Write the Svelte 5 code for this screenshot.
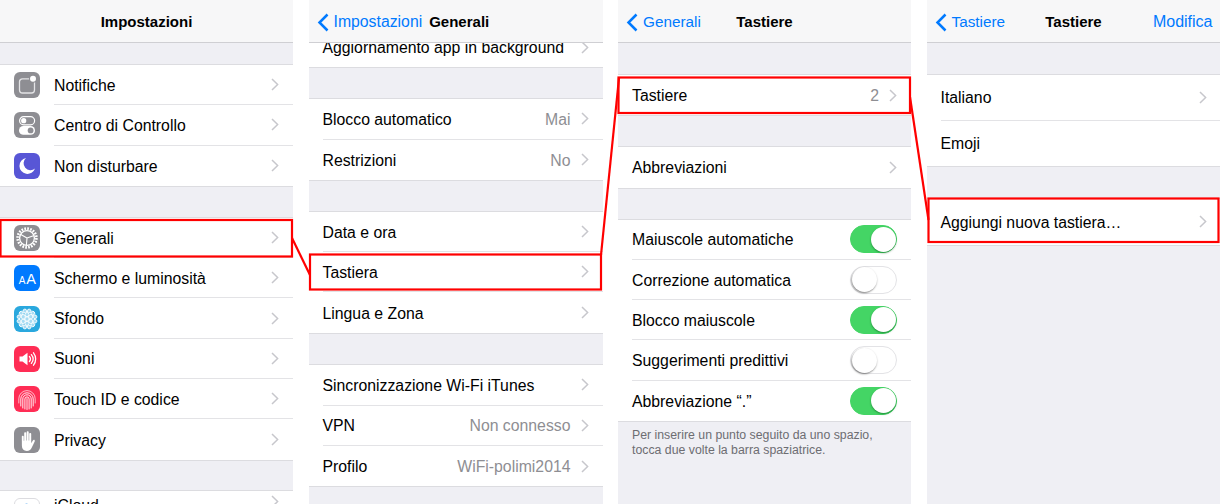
<script>
  const impostazioni = [
    { gap: 22, rows: [
      { label: 'Notifiche', icon: 'notifiche' },
      { label: 'Centro di Controllo', icon: 'controllo' },
      { label: 'Non disturbare', icon: 'luna' }
    ] },
    { gap: 32, rows: [
      { label: 'Generali', icon: 'generali' },
      { label: 'Schermo e luminosità', icon: 'schermo' },
      { label: 'Sfondo', icon: 'sfondo' },
      { label: 'Suoni', icon: 'suoni' },
      { label: 'Touch ID e codice', icon: 'touch' },
      { label: 'Privacy', icon: 'privacy' }
    ] },
    { gap: 31, rows: [{ label: 'iCloud', icon: 'icloud', alto: true }] }
  ];

  const generali = [
    { gap: -16, rows: [{ label: 'Aggiornamento app in background' }] },
    { gap: 32, rows: [
      { label: 'Blocco automatico', value: 'Mai' },
      { label: 'Restrizioni', value: 'No' }
    ] },
    { gap: 32, rows: [
      { label: 'Data e ora' },
      { label: 'Tastiera' },
      { label: 'Lingua e Zona' }
    ] },
    { gap: 32.5, rows: [
      { label: 'Sincronizzazione Wi-Fi iTunes' },
      { label: 'VPN', value: 'Non connesso' },
      { label: 'Profilo', value: 'WiFi-polimi2014' }
    ] }
  ];

  const tastiere = [
    { gap: 32, rows: [{ label: 'Tastiere', value: '2' }] },
    { gap: 32, rows: [{ label: 'Abbreviazioni' }] },
    { gap: 32, rows: [
      { label: 'Maiuscole automatiche', on: true },
      { label: 'Correzione automatica', on: false },
      { label: 'Blocco maiuscole', on: true },
      { label: 'Suggerimenti predittivi', on: false },
      { label: 'Abbreviazione “.”', on: true }
    ] }
  ];

  const elenco = [
    { gap: 32, rows: [{ label: 'Italiano' }, { label: 'Emoji', nochev: true }] },
    { gap: 33, rows: [{ label: 'Aggiungi nuova tastiera…' }] }
  ];

  const anelloInterno = [0, 60, 120, 180, 240, 300];
  const anelloEsterno = [0, 30, 60, 90, 120, 150, 180, 210, 240, 270, 300, 330];
</script>

{#snippet icona(nome)}
  <svg class="icona" viewBox="0 0 26 26" width="26" height="26" aria-hidden="true">
    {#if nome === 'notifiche'}
      <rect width="26" height="26" rx="6" fill="#8e8e93" />
      <rect x="5.5" y="6.8" width="15" height="14.2" rx="3" fill="none" stroke="#e4e4e6" stroke-width="1.3" />
      <circle cx="19" cy="6.8" r="4" fill="#8e8e93" />
      <circle cx="19" cy="6.8" r="3" fill="#fff" />
    {:else if nome === 'controllo'}
      <rect width="26" height="26" rx="6" fill="#8e8e93" />
      <rect x="5.6" y="4.6" width="15" height="8.2" rx="4.1" fill="none" stroke="#fff" stroke-width="1.2" />
      <circle cx="9.7" cy="8.7" r="2.6" fill="#fff" />
      <rect x="5" y="14" width="16" height="8.8" rx="4.4" fill="#fff" />
      <circle cx="16.6" cy="18.4" r="2.9" fill="#8e8e93" />
    {:else if nome === 'luna'}
      <rect width="26" height="26" rx="6" fill="#5856d6" />
      <path d="M12 5a8 8 0 1 0 9 10.500 6.800 6.800 0 0 1-9-10.500z" fill="#fff" />
    {:else if nome === 'generali'}
      <rect width="26" height="26" rx="6" fill="#8e8e93" />
      <circle cx="13" cy="13" r="9.4" fill="none" stroke="#fff" stroke-width="2.6" stroke-dasharray="1.7 1.25" />
      <circle cx="13" cy="13" r="7.4" fill="none" stroke="#fff" stroke-width="1.3" />
      <path d="M13 13 6.800 9.400M13 13l6.400-2.200M13 13l-.6 7" stroke="#fff" stroke-width="1.100" fill="none" />
    {:else if nome === 'schermo'}
      <rect width="26" height="26" rx="6" fill="#007aff" />
      <text class="aa piccola" x="8" y="18.500" text-anchor="middle">A</text>
      <text class="aa" x="17" y="18.500" text-anchor="middle">A</text>
    {:else if nome === 'sfondo'}
      <rect width="26" height="26" rx="6" fill="#2aa8de" />
      <g fill="#a8dcf3" stroke="#fff" stroke-width="0.9">
        <circle cx="13" cy="13" r="2.100" />
        {#each anelloInterno as a}
          <circle cx="13" cy="8.600" r="2.100" transform="rotate({a} 13 13)" />
        {/each}
        {#each anelloEsterno as a}
          <circle cx="13" cy="4.800" r="1.900" transform="rotate({a + 15} 13 13)" />
        {/each}
      </g>
    {:else if nome === 'suoni'}
      <rect width="26" height="26" rx="6" fill="#ff2d55" />
      <path d="M5.500 10.500h3l5-3.800v12.600l-5-3.800h-3z" fill="#fff" />
      <g fill="none" stroke="#fff" stroke-width="1.300" stroke-linecap="round">
        <path d="M15.400 10.400a4 4 0 0 1 0 5.200" />
        <path d="M17.400 8.600a7 7 0 0 1 0 8.800" />
        <path d="M19.500 6.800a10 10 0 0 1 0 12.400" />
      </g>
    {:else if nome === 'touch'}
      <rect width="26" height="26" rx="6" fill="#ff2d55" />
      <g fill="none" stroke="#fff" stroke-width="0.900" stroke-linecap="round">
        <path d="M4.800 17v-4.200a8.200 8.200 0 0 1 16.400 0V17" opacity=".75" />
        <path d="M6.800 20v-7a6.200 6.200 0 0 1 12.400 0v7" />
        <path d="M8.800 22v-9a4.200 4.200 0 0 1 8.400 0v9" />
        <path d="M10.900 23v-10a2.100 2.100 0 0 1 4.200 0v10" />
        <path d="M13 23.500V12.600" />
      </g>
    {:else if nome === 'privacy'}
      <rect width="26" height="26" rx="6" fill="#8e8e93" />
      <path d="M7.800 9.600c0-1.300 1.900-1.300 1.900 0v4.200h.5V6.400c0-1.400 2-1.400 2 0v7h.5V5.400c0-1.400 2-1.400 2 0v8h.5V7c0-1.400 2-1.400 2 0v9.200l1.700-2.800c.8-1.200 2.400-.3 1.800 1l-2.900 6c-.9 2-2.500 3.600-5 3.600-3.100 0-4.900-2-4.900-5.200z" fill="#fff" />
    {:else if nome === 'icloud'}
      <rect x="0.500" y="0.500" width="25" height="25" rx="5.500" fill="#fff" stroke="#dcdce0" />
      <path d="M8 14a3 3 0 0 1 1-5.800 4.200 4.200 0 0 1 8 .8 2.600 2.600 0 0 1 .6 5z" fill="#5aa9f0" />
    {/if}
  </svg>
{/snippet}

{#snippet freccia()}
  <svg class="freccia" viewBox="0 0 8 13" width="8" height="13" aria-hidden="true">
    <path d="M1 1l5.600 5.500L1 12" fill="none" stroke="#c7c7cc" stroke-width="1.500" />
  </svg>
{/snippet}

{#snippet indietro()}
  <svg class="indietro" viewBox="0 0 12 19" width="12" height="19" aria-hidden="true">
    <path d="M10.500 1.500L2.500 9.500l8 8" fill="none" stroke="#007aff" stroke-width="2.500" />
  </svg>
{/snippet}

{#snippet gruppi(sezioni)}
  {#each sezioni as sezione}
    <ul class="gruppo" style:margin-top="{sezione.gap}px">
      {#each sezione.rows as riga}
        <li class="riga" class:con-icona={riga.icon}>
          {#if riga.icon}{@render icona(riga.icon)}{/if}
          <div class="corpo" class:alto={riga.alto}>
            <span class="nome">{riga.label}</span>
            {#if riga.value}<span class="valore">{riga.value}</span>{/if}
            {#if riga.on !== undefined}
              <span class="switch" class:on={riga.on}><span class="pomello"></span></span>
            {:else if !riga.nochev}
              {@render freccia()}
            {/if}
          </div>
        </li>
      {/each}
    </ul>
  {/each}
{/snippet}

<main class="pagina">
  <section class="schermo">
    <header class="nav">
      <span></span>
      <h1>Impostazioni</h1>
      <span></span>
    </header>
    {@render gruppi(impostazioni)}
  </section>

  <section class="schermo">
    <header class="nav stretta">
      <span class="back larga">{@render indietro()}Impostazioni</span>
      <h1>Generali</h1>
      <span></span>
    </header>
    {@render gruppi(generali)}
  </section>

  <section class="schermo">
    <header class="nav">
      <span class="back">{@render indietro()}Generali</span>
      <h1>Tastiere</h1>
      <span></span>
    </header>
    {@render gruppi(tastiere)}
    <p class="nota">Per inserire un punto seguito da uno spazio,<br />tocca due volte la barra spaziatrice.</p>
  </section>

  <section class="schermo alta">
    <header class="nav">
      <span class="back">{@render indietro()}Tastiere</span>
      <h1>Tastiere</h1>
      <span class="azione">Modifica</span>
    </header>
    {@render gruppi(elenco)}
  </section>

  <!-- riquadri e linee rosse sopra gli screenshot -->
  <svg class="annotazioni" viewBox="0 0 1220 504" width="1220" height="504" aria-hidden="true">
    <g fill="none" stroke="#ff0000" stroke-width="2.200">
      <rect x="0.500" y="220" width="291.500" height="36.500" />
      <rect x="310" y="254.500" width="291" height="35" />
      <rect x="618.500" y="77.500" width="291.500" height="35.500" />
      <rect x="928.500" y="198.500" width="290" height="43.500" />
      <path d="M292 238L310 275" />
      <path d="M601 255L619 78" />
      <path d="M910 97L928.500 220" />
    </g>
  </svg>
</main>

<style>
  :global(body) {
    margin: 0;
    background: #fff;
  }

  .pagina {
    position: relative;
    display: grid;
    grid-template-columns: 293px 294px 293px 294px;
    column-gap: 15.500px;
    width: 1220px;
    height: 504px;
    overflow: hidden;
    font-family: "Liberation Sans", Arial, sans-serif;
    color: #000;
  }

  .schermo {
    height: 504px;
    overflow: hidden;
    background: #efeff4;
  }

  /* ===== Barra di navigazione ===== */
  .nav {
    position: relative;
    z-index: 1;
    display: grid;
    grid-template-columns: 1fr auto 1fr;
    align-items: center;
    height: 43px;
    padding: 2px 8px 0;
    box-sizing: border-box;
    background: #f7f7f8;
    border-bottom: 1px solid #cfcfd3;
  }

  .nav.stretta {
    grid-template-columns: auto auto 1fr;
    column-gap: 7px;
  }

  .nav h1 {
    margin: 0;
    font-size: 15px;
    font-weight: 700;
    line-height: 40px;
  }

  .back,
  .azione {
    display: flex;
    align-items: center;
    color: #007aff;
    font-size: 15.300px;
    line-height: 40px;
  }

  .back.larga {
    font-size: 15.800px;
  }

  .indietro {
    margin-right: 5px;
  }

  .azione {
    justify-content: flex-end;
    font-size: 16px;
  }

  /* ===== Gruppi ===== */
  .gruppo {
    margin: 0;
    padding: 0;
    list-style: none;
    background: #fff;
    box-shadow: 0 -1px 0 #dcdce0, 0 1px 0 #dcdce0;
  }

  .riga {
    display: flex;
    align-items: center;
    height: 40.300px;
    padding-left: 14px;
    box-sizing: border-box;
  }

  .alta .riga {
    height: 45.500px;
  }

  .riga.con-icona .corpo {
    margin-left: 14px;
  }

  .icona {
    flex: none;
  }

  .corpo {
    flex: 1;
    display: flex;
    align-items: center;
    height: 100%;
    padding-right: 14px;
    box-sizing: border-box;
    border-bottom: 1px solid #e3e3e6;
    min-width: 0;
  }

  /* riga con sottotitolo: il nome sta in alto */
  .corpo.alto {
    align-items: flex-start;
    padding-top: 4px;
  }

  .riga:last-child .corpo {
    border-bottom: 0;
  }

  .nome {
    flex: 1;
    padding-top: 2px;
    font-size: 15.800px;
    white-space: nowrap;
  }

  .valore {
    margin-right: 10px;
    padding-top: 2px;
    font-size: 15.800px;
    color: #8e8e93;
    white-space: nowrap;
  }

  .freccia {
    flex: none;
  }

  /* ===== Interruttori ===== */
  .switch {
    flex: none;
    display: flex;
    width: 47px;
    height: 28px;
    padding: 1px;
    box-sizing: border-box;
    border-radius: 14px;
    background: #fff;
    border: 1px solid #e3e3e6;
  }

  .switch.on {
    justify-content: flex-end;
    background: #44d565;
    border-color: #44d565;
  }

  .pomello {
    width: 25px;
    height: 25px;
    margin: -0.500px;
    border-radius: 50%;
    background: #fff;
    box-shadow: -0.500px 1px 2px rgba(0, 0, 0, 0.5);
  }

  .switch.on .pomello {
    box-shadow: 0 1px 2px rgba(0, 80, 20, 0.55);
  }

  .nota {
    margin: 7px 14px 0;
    font-size: 12.300px;
    line-height: 14.500px;
    color: #6d6d72;
    white-space: nowrap;
  }

  /* ===== Annotazioni ===== */
  .annotazioni {
    position: absolute;
    top: 0;
    left: 0;
    z-index: 2;
  }

  .aa {
    fill: #fff;
    font-size: 14.500px;
    font-family: "Liberation Sans", Arial, sans-serif;
  }

  .aa.piccola {
    font-size: 10px;
  }
</style>
